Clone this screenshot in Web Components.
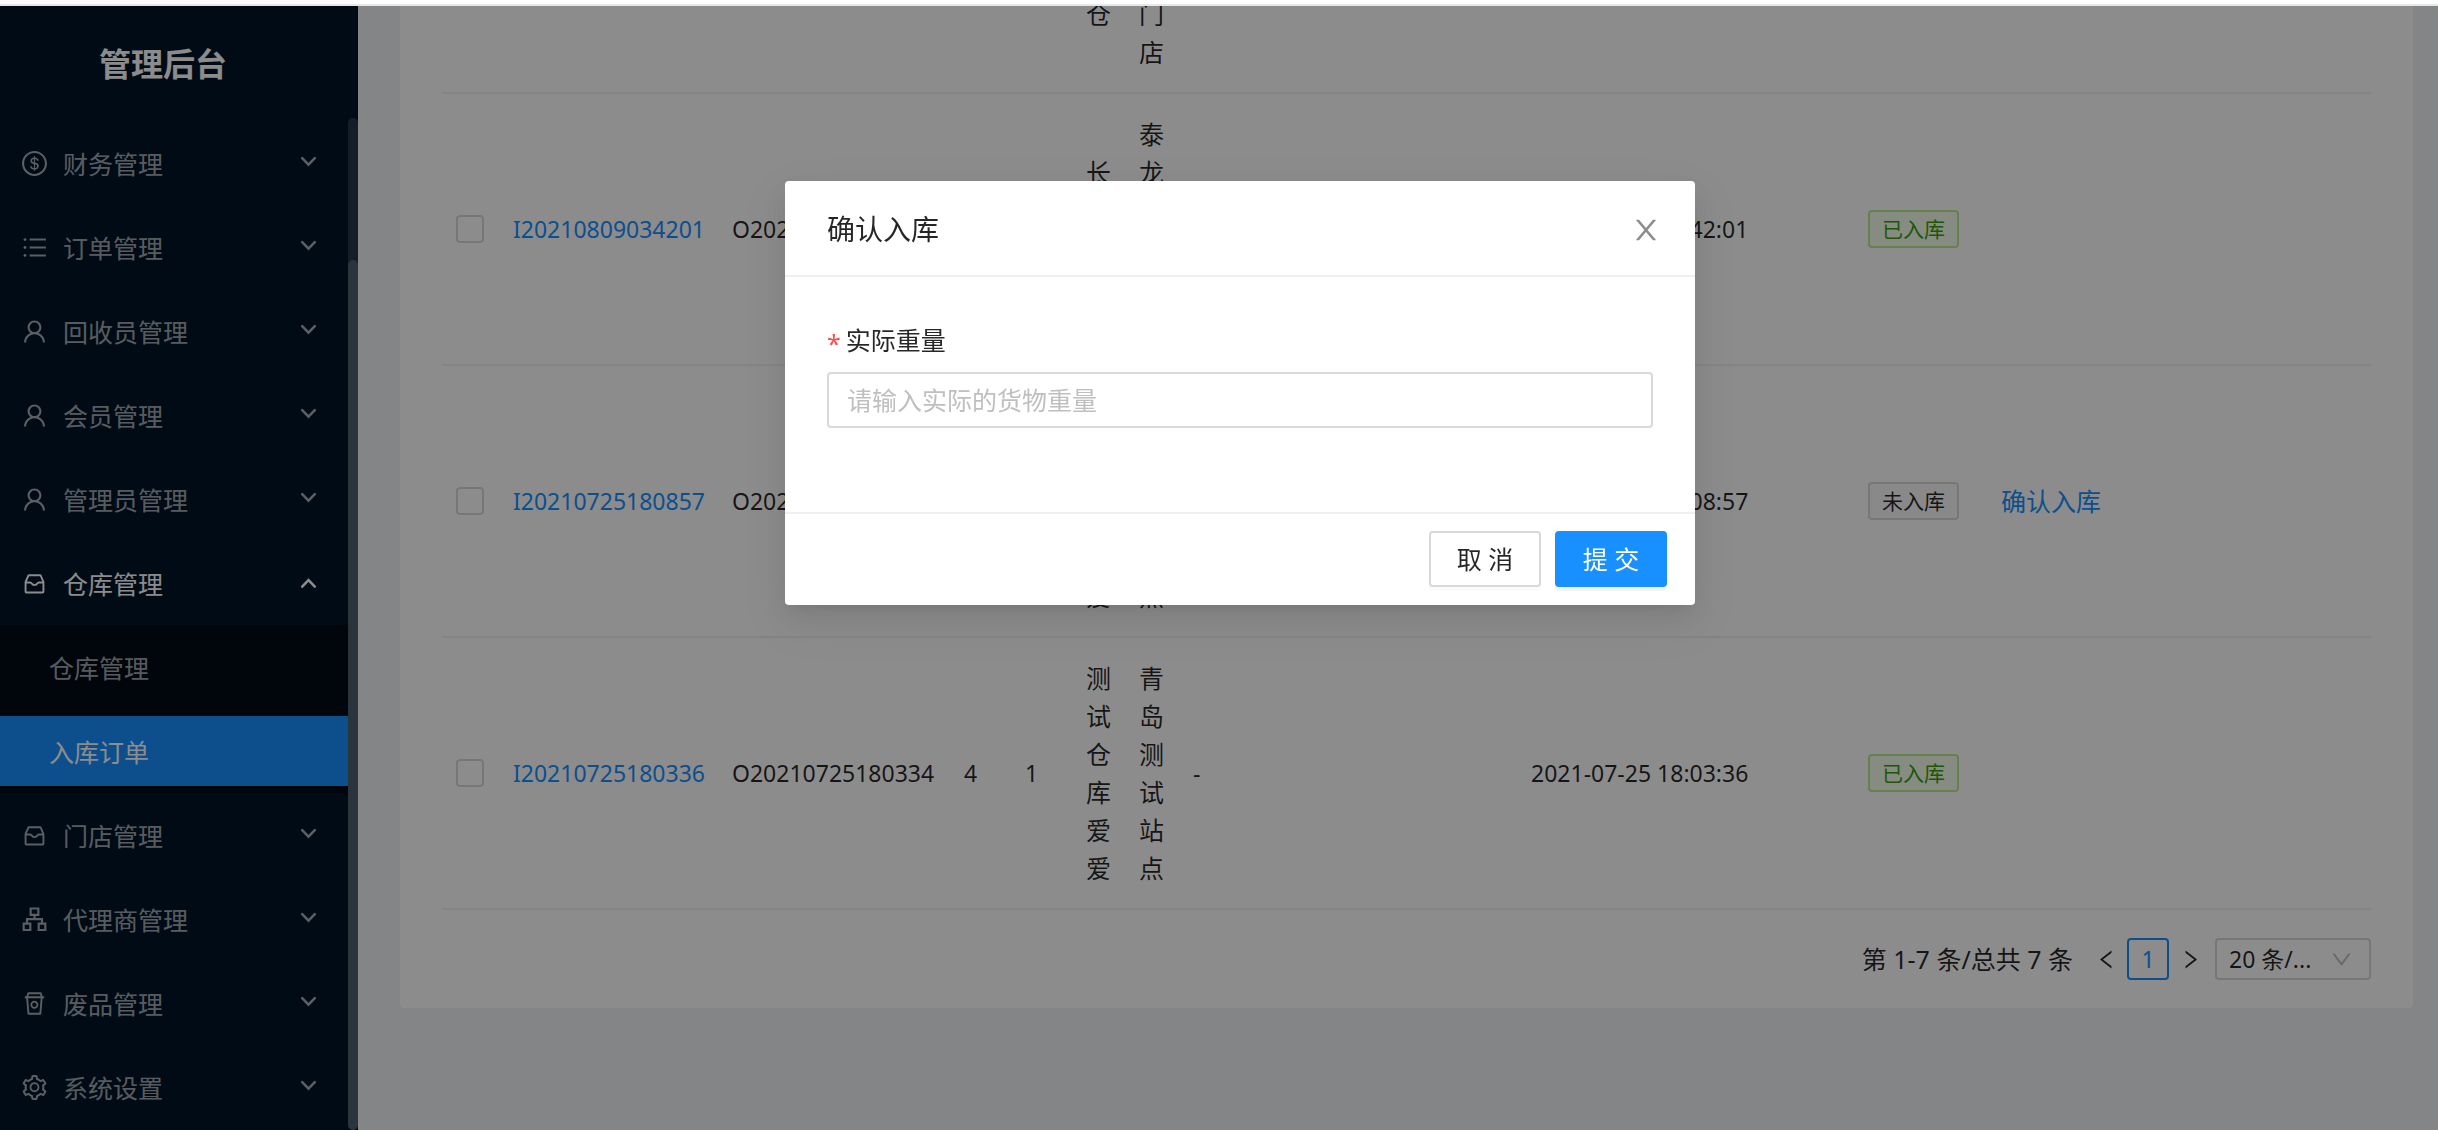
<!DOCTYPE html>
<html lang="zh-CN">
<head>
<meta charset="utf-8">
<title>管理后台</title>
<style>
  html, body { height: 100%; }
  body {
    margin: 0;
    overflow: hidden;
    font-family: "Noto Sans", "Noto Sans CJK SC", sans-serif;
    font-size: 25px;
    line-height: 38px;
    color: rgba(0, 0, 0, .85);
    --primary: #1890ff;
    --line: #f0f0f0;
    --border: #d9d9d9;
  }
</style>
</head>
<body>
<app-shell>
  <side-menu slot="side" brand="管理后台">
    <menu-entry icon="dollar">财务管理</menu-entry>
    <menu-entry icon="list">订单管理</menu-entry>
    <menu-entry icon="user">回收员管理</menu-entry>
    <menu-entry icon="user">会员管理</menu-entry>
    <menu-entry icon="user">管理员管理</menu-entry>
    <menu-entry icon="inbox" open>仓库管理
      <sub-entry slot="children">仓库管理</sub-entry>
      <sub-entry slot="children" selected>入库订单</sub-entry>
    </menu-entry>
    <menu-entry icon="inbox">门店管理</menu-entry>
    <menu-entry icon="tree">代理商管理</menu-entry>
    <menu-entry icon="rest">废品管理</menu-entry>
    <menu-entry icon="setting">系统设置</menu-entry>
  </side-menu>
  <content-card>
    <order-table></order-table>
    <page-bar></page-bar>
  </content-card>
  <modal-dialog slot="overlay" heading="确认入库">
    <weight-field></weight-field>
    <ui-button slot="footer">取 消</ui-button>
    <ui-button slot="footer" primary>提 交</ui-button>
  </modal-dialog>
</app-shell>

<script>
const ICONS = {
  dollar: '<path d="M512 64C264.6 64 64 264.6 64 512s200.6 448 448 448 448-200.6 448-448S759.4 64 512 64zm0 820c-205.4 0-372-166.6-372-372s166.6-372 372-372 372 166.6 372 372-166.6 372-372 372zm47.7-395.2l-25.4-5.9V348.6c38 5.2 61.5 29 65.5 58.2.5 4 3.9 6.9 7.9 6.9h44.9c4.7 0 8.4-4.1 8-8.8-6.1-62.3-57.4-102.3-125.9-109.2V263c0-4.4-3.6-8-8-8h-28.1c-4.4 0-8 3.6-8 8v33c-70.8 6.9-126.2 46-126.2 119 0 67.6 49.8 100.2 102.1 112.7l24.7 6.3v142.7c-44.2-5.9-69-29.5-74.1-61.3-.6-3.8-4-6.6-7.9-6.6H363c-4.7 0-8.4 4-8 8.7 4.5 55 46.2 105.6 135.2 112.1V761c0 4.4 3.6 8 8 8h28.4c4.4 0 8-3.6 8-8.1l-.2-31.7c78.3-6.9 134.3-48.8 134.3-124-.1-69.4-44.2-100.4-109-116.4zm-68.6-16.2c-5.6-1.6-10.3-3.1-15-5-33.8-12.2-49.5-31.9-49.5-57.3 0-36.3 27.5-57 64.5-61.7v124zM534.3 677V543.3c3.1.9 5.9 1.6 8.8 2.2 47.3 14.4 63.2 34.4 63.2 65.1 0 39.1-29.4 62.6-72 66.4z"/>',
  list: '<path d="M344 192h568a8 8 0 018 8v56a8 8 0 01-8 8H344a8 8 0 01-8-8v-56a8 8 0 018-8zM344 476h568a8 8 0 018 8v56a8 8 0 01-8 8H344a8 8 0 01-8-8v-56a8 8 0 018-8zM344 760h568a8 8 0 018 8v56a8 8 0 01-8 8H344a8 8 0 01-8-8v-56a8 8 0 018-8z"/><circle cx="172" cy="228" r="50"/><circle cx="172" cy="512" r="50"/><circle cx="172" cy="796" r="50"/>',
  user: '<path d="M858.5 763.6a374 374 0 00-80.6-119.5 375.63 375.63 0 00-119.5-80.6c-.4-.2-.8-.3-1.2-.5C719.5 518 760 444.7 760 362c0-137-111-248-248-248S264 225 264 362c0 82.7 40.5 156 102.8 201.1-.4.2-.8.3-1.2.5-44.8 18.9-85 46-119.5 80.6a375.63 375.63 0 00-80.6 119.5A371.7 371.7 0 00136 901.8a8 8 0 008 8.2h60c4.4 0 7.9-3.5 8-7.8 2-77.2 33-149.5 87.8-204.3 56.7-56.7 132-87.9 212.2-87.9s155.5 31.2 212.2 87.9C779 752.7 810 825 812 902.2c.1 4.4 3.6 7.8 8 7.8h60a8 8 0 008-8.2c-1-47.8-10.9-94.3-29.5-138.2zM512 534c-45.9 0-89.1-17.9-121.6-50.4S340 407.9 340 362c0-45.9 17.9-89.1 50.4-121.6S466.1 190 512 190s89.1 17.9 121.6 50.4S684 316.1 684 362c0 45.9-17.9 89.1-50.4 121.6S557.9 534 512 534z"/>',
  inbox: '<path fill="none" stroke="currentColor" stroke-width="68" stroke-linejoin="round" d="M318 216h388a30 30 0 0128 18l98 222v350a30 30 0 01-30 30H222a30 30 0 01-30-30V456l98-222a30 30 0 0128-18zM204 474h150c30 0 44 14 58 38 22 38 54 58 100 58s78-20 100-58c14-24 28-38 58-38h150"/>',
  tree: '<path fill="none" stroke="currentColor" stroke-width="76" d="M374 118h276v230H374zM124 658h238v230H124zM662 658h238v230H662zM512 348v150M243 658V500h538v158"/>',
  rest: '<path d="M508 704c79.5 0 144-64.5 144-144s-64.5-144-144-144-144 64.5-144 144 64.5 144 144 144zm0-224c44.2 0 80 35.8 80 80s-35.8 80-80 80-80-35.8-80-80 35.8-80 80-80z"/><path d="M832 256h-28.1l-35.7-120.9c-4-13.7-16.5-23.1-30.7-23.1h-451c-14.3 0-26.8 9.4-30.7 23.1L220.1 256H192c-17.7 0-32 14.3-32 32v28c0 4.4 3.6 8 8 8h45.8l47.7 558.7a32 32 0 0031.9 29.3h429.2a32 32 0 0031.9-29.3L802.2 324H856c4.4 0 8-3.6 8-8v-28c0-17.7-14.3-32-32-32zm-518.6-76h397.2l22.4 76H291l22.4-76zm376.2 664H326.4L282 324h451.9l-44.3 520z"/>',
  setting: '<path d="M924.8 625.7l-65.5-56c3.1-19 4.7-38.4 4.7-57.8s-1.6-38.8-4.7-57.8l65.5-56a32.03 32.03 0 009.3-35.2l-.9-2.6a443.74 443.74 0 00-79.7-137.9l-1.8-2.1a32.12 32.12 0 00-35.1-9.5l-81.3 28.9c-30-24.6-63.5-44-99.7-57.6l-15.7-85a32.05 32.05 0 00-25.8-25.7l-2.7-.5c-52.1-9.4-106.9-9.4-159 0l-2.7.5a32.05 32.05 0 00-25.8 25.7l-15.8 85.4a351.86 351.86 0 00-99 57.4l-81.9-29.1a32 32 0 00-35.1 9.5l-1.8 2.1a446.02 446.02 0 00-79.7 137.9l-.9 2.6c-4.5 12.5-.8 26.5 9.3 35.2l66.3 56.6c-3.1 18.8-4.6 38-4.6 57.1 0 19.2 1.5 38.4 4.6 57.1L99 625.5a32.03 32.03 0 00-9.3 35.2l.9 2.6c18.1 50.4 44.9 96.9 79.7 137.9l1.8 2.1a32.12 32.12 0 0035.1 9.5l81.9-29.1c29.8 24.5 63.1 43.9 99 57.4l15.8 85.4a32.05 32.05 0 0025.8 25.7l2.7.5a449.4 449.4 0 00159 0l2.7-.5a32.05 32.05 0 0025.8-25.7l15.7-85a350 350 0 0099.7-57.6l81.3 28.9a32 32 0 0035.1-9.5l1.8-2.1c34.8-41.1 61.6-87.5 79.7-137.9l.9-2.6c4.5-12.3.8-26.3-9.3-35zM788.3 465.9c2.5 15.1 3.8 30.6 3.8 46.1s-1.3 31-3.8 46.1l-6.6 40.1 74.7 63.9a370.03 370.03 0 01-42.6 73.6L721 702.8l-31.4 25.8c-23.9 19.6-50.5 35-79.3 45.8l-38.1 14.3-17.9 97a377.5 377.5 0 01-85 0l-17.9-97.2-37.8-14.5c-28.5-10.8-55-26.2-78.7-45.7l-31.4-25.9-93.4 33.2c-17-22.9-31.2-47.6-42.6-73.6l75.5-64.5-6.5-40c-2.4-14.9-3.7-30.3-3.7-45.5 0-15.3 1.2-30.6 3.7-45.5l6.5-40-75.5-64.5c11.3-26.1 25.6-50.7 42.6-73.6l93.4 33.2 31.4-25.9c23.7-19.5 50.2-34.9 78.7-45.7l37.9-14.3 17.9-97.2c28.1-3.2 56.8-3.2 85 0l17.9 97 38.1 14.3c28.7 10.8 55.4 26.2 79.3 45.8l31.4 25.8 92.8-32.9c17 22.9 31.2 47.6 42.6 73.6L781.8 426l6.5 39.9zM512 326c-97.2 0-176 78.8-176 176s78.8 176 176 176 176-78.8 176-176-78.8-176-176-176zm79.2 255.2A111.6 111.6 0 01512 614c-29.9 0-58-11.7-79.2-32.8A111.6 111.6 0 01400 502c0-29.9 11.7-58 32.8-79.2C454 401.6 482.1 390 512 390c29.9 0 58 11.6 79.2 32.8A111.6 111.6 0 01624 502c0 29.9-11.7 58-32.8 79.2z"/>',
  close: '<path d="M563.8 512l262.5-312.9c4.4-5.2.7-13.1-6.1-13.1h-79.8c-4.7 0-9.2 2.1-12.3 5.7L511.6 449.8 295.1 191.7c-3-3.6-7.5-5.7-12.3-5.7H203c-6.8 0-10.5 7.9-6.1 13.1L459.4 512 196.9 824.9A7.95 7.95 0 00203 838h79.8c4.7 0 9.2-2.1 12.3-5.7l216.5-258.1 216.5 258.1c3 3.6 7.5 5.7 12.3 5.7h79.8c6.8 0 10.5-7.9 6.1-13.1L563.8 512z"/>',
  left: '<path d="M724 218.3V141c0-6.7-7.7-10.4-12.9-6.3L260.3 486.8a31.86 31.86 0 000 50.3l450.8 352.1c5.3 4.1 12.9.4 12.9-6.3v-77.3c0-4.9-2.3-9.6-6.1-12.6l-360-281 360-281.1c3.8-3 6.1-7.7 6.1-12.6z"/>',
  right: '<path d="M765.7 486.8L314.9 134.7A7.97 7.97 0 00302 141v77.3c0 4.9 2.3 9.6 6.1 12.6l360 281.1-360 281.1c-3.9 3-6.1 7.7-6.1 12.6V883c0 6.7 7.7 10.4 12.9 6.3l450.8-352.1a31.96 31.96 0 000-50.4z"/>',
  down: '<path d="M884 256h-75c-5.1 0-9.9 2.5-12.9 6.6L512 654.2 227.9 262.6c-3-4.1-7.8-6.6-12.9-6.6h-75c-6.5 0-10.3 7.4-6.5 12.7l352.6 486.1c12.8 17.6 39 17.6 51.7 0l352.6-486.1c3.9-5.3.1-12.7-6.4-12.7z"/>'
};
const icon = (name, size) =>
  `<svg width="${size}" height="${size}" viewBox="64 64 896 896" fill="currentColor" aria-hidden="true">${ICONS[name]}</svg>`;

const define = (tag, render) => customElements.define(tag, class extends HTMLElement {
  constructor() {
    super();
    this.attachShadow({ mode: 'open' });
  }
  connectedCallback() {
    this.shadowRoot.innerHTML = '<style>*{box-sizing:border-box}svg{display:block;flex:none}</style>' + render(this);
  }
});

define('app-shell', () => `
  <style>
    :host { display: flex; flex-direction: column; height: 100vh; }
    .edge { flex: none; height: 6px; background: #fff; border-bottom: 2px solid #e5e8e6; }
    .body { flex: 1; display: flex; min-height: 0; background: #f0f2f5; }
    main { flex: 1; min-width: 0; display: flex; flex-direction: column; justify-content: flex-end;
           overflow: hidden; padding: 0 25px 122px 42px; }
  </style>
  <div class="edge"></div>
  <div class="body"><slot name="side"></slot><main><slot></slot></main></div>
  <slot name="overlay"></slot>`);

define('side-menu', el => `
  <style>
    :host { flex: none; display: flex; flex-direction: column; width: 358px; background: #001529; color: #fff; }
    h1 { flex: none; margin: 0; height: 112px; padding: 4px 0 0 99px; display: flex; align-items: center;
         font-size: 32px; font-weight: 700; }
    .scroll { flex: 1; min-height: 0; display: flex; }
    nav { flex: 1; overflow: hidden; padding-top: 3px; }
    .track { width: 10px; border-radius: 5px; background: rgba(255,255,255,.15); padding-top: 142px; display: flex; }
    .thumb { flex: 1; border-radius: 5px; background: rgba(255,255,255,.2); }
  </style>
  <h1>${el.getAttribute('brand')}</h1>
  <div class="scroll"><nav><slot></slot></nav><div class="track"><div class="thumb"></div></div></div>`);

define('menu-entry', el => `
  <style>
    :host { display: block; color: rgba(255,255,255,.65); }
    :host([open]) { color: #fff; }
    button { all: unset; box-sizing: border-box; display: flex; align-items: center; gap: 16px; width: 100%;
             height: 84px; padding: 0 31px 0 22px; cursor: pointer; }
    span { flex: 1; padding-top: 2px; }
    .arrow { margin-bottom: 2px; }
    :host([open]) .arrow { margin-bottom: 0; }
    .sub { background: #000c17; }
  </style>
  <button type="button" aria-expanded="${el.hasAttribute('open')}">${icon(el.getAttribute('icon'), 25)}
    <span><slot></slot></span>
    <svg class="arrow" width="17" height="12" viewBox="0 0 17 12" fill="none" stroke="currentColor" stroke-width="2.6" stroke-linecap="round">
      <path d="${el.hasAttribute('open') ? 'M2.2 9.6L8.5 3.2L14.8 9.6' : 'M2.2 2.2L8.5 8.6L14.8 2.2'}"/></svg>
  </button>
  <div class="sub"><slot name="children"></slot></div>`);

define('sub-entry', () => `
  <style>
    :host { display: block; padding: 7px 0; color: rgba(255,255,255,.65); }
    a { display: flex; align-items: center; height: 70px; padding: 2px 0 0 49px; color: inherit; text-decoration: none; }
    :host([selected]) { color: #fff; }
    :host([selected]) a { background: var(--primary); }
  </style>
  <a href="#"><slot></slot></a>`);

define('content-card', () => `
  <style>
    :host { display: block; flex: none; background: #fff; border-radius: 4px; padding: 0 42px 28px; }
  </style>
  <slot></slot>`);

define('status-tag', () => `
  <style>
    :host { display: block; width: fit-content; padding: 0 12px; border: 2px solid var(--border);
            border-radius: 4px; background: #fafafa; font-size: 21px; line-height: 34px; white-space: nowrap; }
    :host([done]) { color: #389e0d; background: #f6ffed; border-color: #b7eb8f; }
  </style>
  <slot></slot>`);

const ORDERS = [
  { id: 'I20210809034201', order: 'O20210809034200', a: '4', b: '1', store: '长沙仓库', shop: '泰龙小区门店', time: '2021-08-09 03:42:01', done: true },
  { id: 'I20210725180857', order: 'O20210725180855', a: '4', b: '1', store: '测试仓库爱爱', shop: '青岛测试站点', time: '2021-07-25 18:08:57', done: false },
  { id: 'I20210725180336', order: 'O20210725180334', a: '4', b: '1', store: '测试仓库爱爱', shop: '青岛测试站点', time: '2021-07-25 18:03:36', done: true }
];

define('order-table', () => `
  <style>
    :host { display: block; }
    table { width: 100%; table-layout: fixed; border-collapse: separate; border-spacing: 0; }
    td { padding: 21px 14px; border-bottom: 2px solid var(--line); vertical-align: middle; }
    td.cjk { word-break: break-all; padding-right: 0; }
    td.cjk div { width: 25px; }
    td.num { font-size: 23px; white-space: nowrap; }
    tr.tail td { padding-top: 0; vertical-align: top; }
    a { color: var(--primary); text-decoration: none; }
    input { appearance: none; display: block; width: 28px; height: 28px; margin: 0; background: #fff;
            border: 2px solid var(--border); border-radius: 4px; }
  </style>
  <table>
    <colgroup>
      <col style="width:57px"><col style="width:219px"><col style="width:232px"><col style="width:61px">
      <col style="width:61px"><col style="width:53px"><col style="width:54px"><col style="width:338px">
      <col style="width:337px"><col style="width:133px"><col>
    </colgroup>
    <tbody>
      <tr class="tail"><td colspan="5"></td><td class="cjk"><div>仓</div></td><td class="cjk"><div>门店</div></td><td colspan="4"></td></tr>
      ${ORDERS.map(o => `<tr>
        <td><input type="checkbox" aria-label="${o.id}"></td>
        <td class="num"><a href="#">${o.id}</a></td>
        <td class="num">${o.order}</td>
        <td class="num">${o.a}</td>
        <td class="num">${o.b}</td>
        <td class="cjk"><div>${o.store}</div></td>
        <td class="cjk"><div>${o.shop}</div></td>
        <td class="num">-</td>
        <td class="num">${o.time}</td>
        <td><status-tag${o.done ? ' done' : ''}>${o.done ? '已入库' : '未入库'}</status-tag></td>
        <td>${o.done ? '' : '<a href="#">确认入库</a>'}</td>
      </tr>`).join('')}
    </tbody>
  </table>`);

define('page-bar', () => `
  <style>
    :host { display: flex; justify-content: flex-end; align-items: center; padding-top: 28px; }
    button { all: unset; box-sizing: border-box; display: flex; align-items: center; justify-content: center;
             width: 42px; height: 42px; cursor: pointer; }
    .total { margin-right: 12px; }
    .page { border: 2px solid var(--primary); border-radius: 4px; color: var(--primary); font-size: 23px; }
    .size { display: grid; align-items: center; width: 156px; margin-left: 4px; }
    .size > * { grid-area: 1 / 1; }
    .size svg { justify-self: end; margin-right: 19px; color: rgba(0,0,0,.25); pointer-events: none; }
    select { appearance: none; width: 100%; height: 42px; padding: 0 12px; border: 2px solid var(--border);
             border-radius: 4px; background: #fff; color: inherit; font: inherit; font-size: 23px; }
  </style>
  <span class="total">第 1-7 条/总共 7 条</span>
  <button type="button" aria-label="上一页">${icon('left', 21)}</button>
  <button type="button" class="page">1</button>
  <button type="button" aria-label="下一页">${icon('right', 21)}</button>
  <div class="size"><select aria-label="每页条数"><option>20 条/...</option></select>${icon('down', 21)}</div>`);

define('modal-dialog', el => `
  <style>
    :host { position: fixed; inset: 6px 0 0; display: flex; justify-content: center; align-items: flex-start;
            padding: 175px 0 0 42px; box-sizing: border-box; background: rgba(0,0,0,.45); }
    section { width: 910px; background: #fff; border-radius: 4px;
              box-shadow: 0 5px 11px -7px rgba(0,0,0,.12), 0 11px 28px rgba(0,0,0,.08), 0 16px 49px 14px rgba(0,0,0,.05); }
    header { display: flex; align-items: center; justify-content: space-between; padding: 29px 35px 27px 42px;
             border-bottom: 2px solid var(--line); }
    h2 { margin: 0; font-size: 28px; font-weight: 400; line-height: 38px; }
    header button { all: unset; padding-top: 2px; color: rgba(0,0,0,.45); cursor: pointer; }
    .body { padding: 42px 42px 84px; }
    footer { display: flex; justify-content: flex-end; gap: 14px; padding: 17px 28px 18px; border-top: 2px solid var(--line); }
  </style>
  <section role="dialog" aria-labelledby="t">
    <header><h2 id="t">${el.getAttribute('heading')}</h2><button type="button" aria-label="关闭">${icon('close', 28)}</button></header>
    <div class="body"><slot></slot></div>
    <footer><slot name="footer"></slot></footer>
  </section>`);

define('weight-field', () => `
  <style>
    :host { display: block; }
    label { display: flex; gap: 5px; height: 53px; line-height: 43px; }
    i { font-style: normal; color: #ff4d4f; line-height: 48px; }
    input { display: block; width: 100%; height: 56px; padding: 0 18px; border: 2px solid var(--border);
            border-radius: 4px; font: inherit; color: inherit; background: #fff; outline: none; }
    input::placeholder { color: #bfbfbf; opacity: 1; }
  </style>
  <label for="w"><i>*</i>实际重量</label>
  <input id="w" type="text" placeholder="请输入实际的货物重量">`);

define('ui-button', el => `
  <style>
    :host { display: block; }
    button { display: block; width: 112px; height: 56px; padding: 0; border: 2px solid var(--border); border-radius: 4px;
             background: #fff; color: inherit; font: inherit; box-shadow: 0 4px 0 rgba(0,0,0,.016); cursor: pointer; }
    :host([primary]) button { color: #fff; background: var(--primary); border-color: var(--primary);
             box-shadow: 0 4px 0 rgba(0,0,0,.045); }
  </style>
  <button type="button"><slot></slot></button>`);
</script>
</body>
</html>
